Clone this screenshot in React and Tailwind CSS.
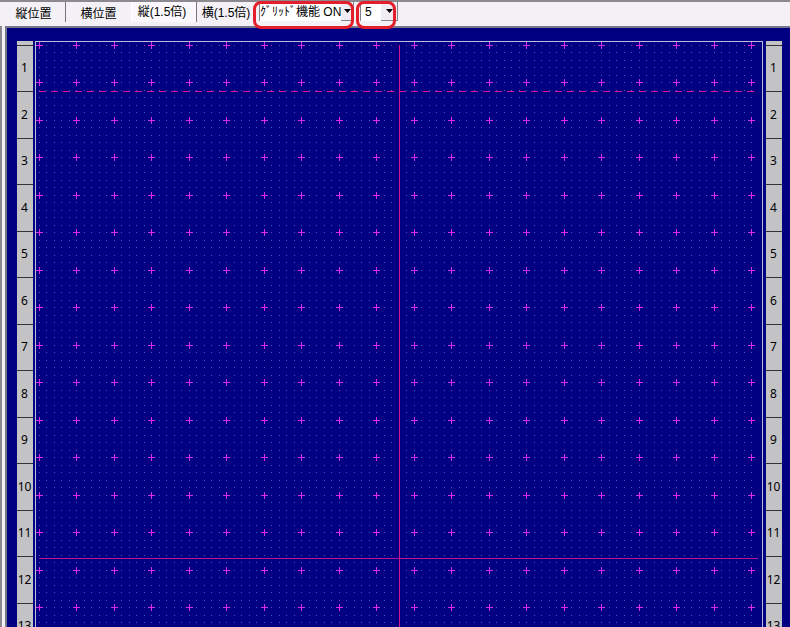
import React, { useState } from 'react';

const STEP = 37.5;
const COLS = 20;
const ROWS = 16;

const crosses = [];
for (let row = 0; row < ROWS; row++) {
  for (let col = 0; col < COLS; col++) {
    crosses.push([Math.floor(4 + col * STEP), Math.floor(4 + row * STEP)]);
  }
}

const dots = [];
for (let row = 0; row < ROWS * 5; row++) {
  for (let col = 0; col <= (COLS - 1) * 5; col++) {
    // every fifth point gets a cross
    if (row % 5 === 0 && col % 5 === 0) continue;
    dots.push(`M${Math.floor(4 + col * 7.5)} ${Math.floor(4 + row * 7.5)}h1v1h-1z`);
  }
}

const dashes = [];
for (let x = 4; x < 716; x += 12) {
  dashes.push(`M${x} 50h7v1h-7z`);
}

const tabs = ['縦位置', '横位置', '縦(1.5倍)', '横(1.5倍)'];

const tabStyles = [
  'w-16 pt-1 border-r border-[#77757d]',
  'w-[65px] pt-1',
  'w-[66px] pr-1 pb-px border-l border-r border-l-white border-r-[#77757d] bg-[#faf8fc]',
  'w-[60px] pr-0.5 pt-px',
];

function Ruler() {
  return (
    <div className="w-4 shrink-0 bg-[#c3c3c6] text-black text-[12px] leading-[14px] font-['Noto_Sans','DejaVu_Sans',sans-serif]">
      <div className="h-1" />
      {Array.from({ length: 13 }, (_, i) => (
        <div
          key={i}
          className={`${i % 2 ? 'h-[47px]' : 'h-[46px]'} pr-px pb-px border-t border-[#333338] flex items-center justify-center`}
        >
          {i + 1}
        </div>
      ))}
    </div>
  );
}

function Select({ label, options, value, onChange, className, arrowClassName }) {
  return (
    <div className="relative h-[19px] flex border-l border-r border-[#85838a] bg-white">
      <select
        aria-label={label}
        value={value}
        onChange={(e) => onChange(e.target.value)}
        className={`appearance-none h-full bg-white outline-none text-[12px] leading-4 ${className}`}
      >
        {options.map((option) => (
          <option key={option}>{option}</option>
        ))}
      </select>
      <span
        className={`pointer-events-none absolute right-0 inset-y-0 bg-[#efedf3] border-b border-[#85838a] flex items-center justify-center ${arrowClassName}`}
      >
        <svg width="7" height="4" viewBox="0 0 7 4">
          <path d="M0 0h7L3.5 4z" fill="#000" />
        </svg>
      </span>
    </div>
  );
}

function Toolbar() {
  const [active, setActive] = useState(2);
  const [grid, setGrid] = useState('ｸﾞﾘｯﾄﾞ機能 ON');
  const [size, setSize] = useState('5');

  return (
    <header className="h-[26px] shrink-0 flex items-start border-t-2 border-[#8b898f] bg-[#f3f0f6]">
      <nav className="flex h-5 pl-0.5">
        {tabs.map((tab, i) => (
          <button
            key={tab}
            aria-pressed={active === i}
            onClick={() => setActive(i)}
            className={`h-5 shrink-0 flex items-center justify-center text-[12px] leading-[14px] whitespace-nowrap ${tabStyles[i]}`}
          >
            {tab}
          </button>
        ))}
      </nav>
      <div className="relative ml-0.5">
        <Select
          label="グリッド機能"
          options={['ｸﾞﾘｯﾄﾞ機能 ON', 'ｸﾞﾘｯﾄﾞ機能 OFF']}
          value={grid}
          onChange={setGrid}
          className="w-[93px] [font-feature-settings:'palt']"
          arrowClassName="w-3"
        />
        <div className="pointer-events-none absolute -left-1.5 right-0 -top-px h-7 border-[3px] border-[#e51e2b] rounded-lg z-10" />
      </div>
      <div className="relative ml-1.5">
        <Select
          label="グリッド間隔"
          options={['5', '10', '20']}
          value={size}
          onChange={setSize}
          className="w-9 pl-1"
          arrowClassName="w-4"
        />
        <div className="pointer-events-none absolute -left-1 right-0.5 -top-px h-7 border-[3px] border-[#e51e2b] rounded-lg z-10" />
      </div>
    </header>
  );
}

function Canvas() {
  return (
    <div className="flex-1 min-w-0 ml-0.5 mr-[3px] border-l border-r border-t border-[#b9bbe0]">
      <svg className="block w-full h-[608px] -ml-px -mt-px" shapeRendering="crispEdges">
        <path d={dots.join('')} fill="#5050c4" />
        <path d={dashes.join('')} fill="#d8149c" />
        <path d="M4 517h719v1H4z" fill="#b81498" />
        <path d="M364 4h1v604h-1z" fill="#d81490" />
        <path
          d={crosses.map(([x, y]) => `M${x - 3} ${y}h7v1h-7zM${x} ${y - 3}h1v7h-1z`).join('')}
          fill="#dc2bea"
        />
      </svg>
    </div>
  );
}

export default function App() {
  return (
    <div className="h-screen overflow-hidden flex flex-col bg-[#f3f0f6] text-black font-['Liberation_Sans','Noto_Sans_CJK_JP',sans-serif]">
      <Toolbar />
      <main className="flex-1 min-h-0 flex border-l-2 border-[#8b898f]">
        <div className="flex-1 min-w-0 ml-[3px] border-l-2 border-t-2 border-[#77768a] bg-[#000080] overflow-hidden">
          <div className="flex pt-[13px] pl-2.5 pr-2">
            <Ruler />
            <Canvas />
            <Ruler />
          </div>
        </div>
      </main>
    </div>
  );
}
